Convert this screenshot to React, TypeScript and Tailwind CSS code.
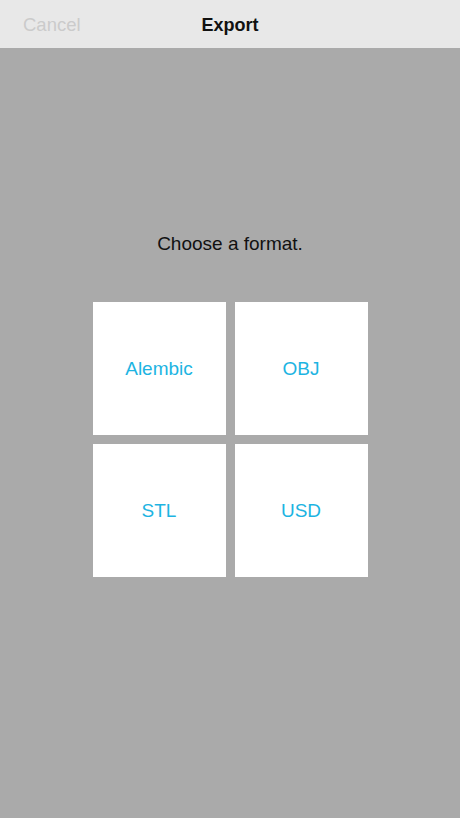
export default function App() {
  const font = { fontFamily: '"Liberation Sans", Arial, sans-serif' };
  const items = ["Alembic", "OBJ", "STL", "USD"];
  return (
    <div className="w-[460px] h-[818px] flex flex-col bg-[#aaaaaa]" style={font}>
      <div className="h-[48px] shrink-0 bg-[#e8e8e8] relative flex items-center justify-center">
        <span className="absolute left-[23px] top-[13px] text-[18.5px] leading-[24px] text-[#cbcbcb]">Cancel</span>
        <span className="pt-[1px] text-[18px] leading-[24px] font-bold text-[#111]">Export</span>
      </div>
      <div className="flex flex-col items-center pt-[184px]">
        <div className="text-[19px] leading-[24px] text-[#111]">Choose a format.</div>
        <div className="mt-[46px] grid grid-cols-[133px_133px] grid-rows-[133px_133px] gap-[9px]">
          {items.map((t) => (
            <div key={t} className="bg-white flex items-center justify-center pt-[2px] text-[19px] text-[#1db4e2]">
              {t}
            </div>
          ))}
        </div>
      </div>
    </div>
  );
}
